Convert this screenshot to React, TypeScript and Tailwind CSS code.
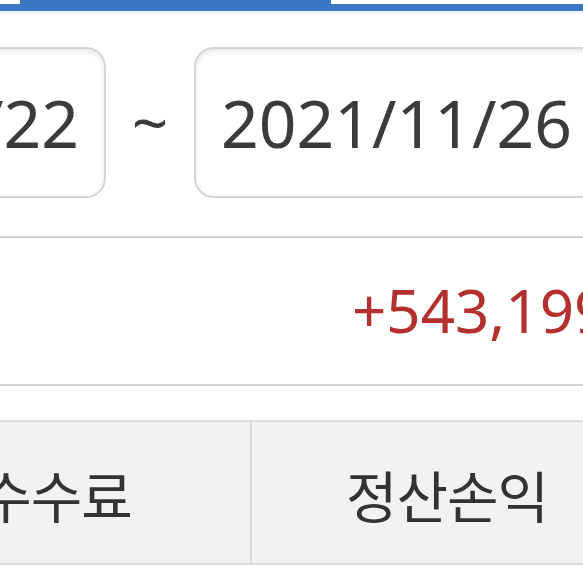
export default function App() {
  const font = { fontFamily: '"Noto Sans", "Noto Sans CJK KR", sans-serif' };

  return (
    <div className="w-[583px] h-[565px] overflow-hidden bg-white" style={font}>
      {/* Tabs */}
      <div className="flex h-[11px]">
        <div className="w-[20px] h-[11px] border-b-[7px] border-[#3b78c4] bg-white" />
        <div className="w-[311px] h-[11px] bg-[#3b78c4]" />
        <div className="flex-1 h-[11px] border-b-[7px] border-[#3b78c4] bg-white" />
      </div>
      <div className="h-[3px] bg-[#f1f6fb]" />

      {/* Date range */}
      <div className="mt-[33px] ml-[-299px] flex items-center whitespace-nowrap">
        <div className="w-[405px] h-[151px] shrink-0 rounded-[20px] border-2 border-[#d6d6d6] shadow-[inset_0_3px_5px_rgba(0,0,0,0.09)] flex items-center justify-center text-[66px] text-[#3b3b3b]">
          2021/11/22
        </div>
        <div className="w-[88px] shrink-0 text-center text-[64px] leading-none text-[#3b3b3b] -mt-[2px]">~</div>
        <div className="w-[405px] h-[151px] shrink-0 rounded-[20px] border-2 border-[#d6d6d6] shadow-[inset_0_3px_5px_rgba(0,0,0,0.09)] flex items-center justify-center text-[66px] text-[#3b3b3b]">
          2021/11/26
        </div>
      </div>

      <div className="mt-[38px] h-[2px] bg-[#d3d3d3]" />

      {/* Total */}
      <div className="h-[146px] flex items-center pl-[352px] whitespace-nowrap">
        <span className="text-[60px] text-[#b3302e] -mt-[2px]">+543,199</span>
      </div>

      <div className="h-[2px] bg-[#d3d3d3]" />

      {/* Header cells */}
      <div className="mt-[34px] h-[145px] bg-[#f2f2f2] border-t-2 border-b-2 border-[#dcdcdc] flex ml-[-138px] whitespace-nowrap">
        <div className="w-[390px] shrink-0 border-r-2 border-[#dcdcdc] flex items-center justify-center pt-[6px] text-[56px] text-[#333] tracking-[-1px]">
          수수료
        </div>
        <div className="w-[390px] shrink-0 flex items-center justify-center pt-[6px] text-[56px] text-[#333] tracking-[-1px]">
          정산손익
        </div>
      </div>
    </div>
  );
}
